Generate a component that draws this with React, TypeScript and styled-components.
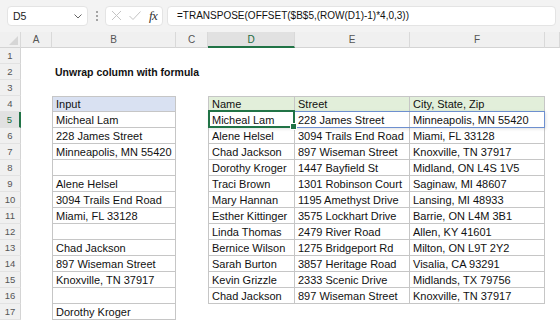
import React from "react";
import styled, { createGlobalStyle } from "styled-components";

const Global = createGlobalStyle`
  html, body { margin: 0; padding: 0; background: #ffffff; }
  body { font-family: "Liberation Sans", Arial, sans-serif; }
  * { box-sizing: border-box; }
`;

const Page = styled.div`
  width: 560px;
  height: 320px;
  overflow: hidden;
  display: flex;
  flex-direction: column;
  background: #fff;
`;

const Toolbar = styled.div`
  height: 32px;
  flex: 0 0 32px;
  background: #f3f3f3;
  display: flex;
  align-items: center;
  padding: 0 4px 1px 7px;
`;

const NameBox = styled.div`
  width: 81px;
  height: 20px;
  background: #fff;
  border: 1px solid #e4e4e4;
  border-radius: 4px;
  display: flex;
  align-items: center;
  justify-content: space-between;
  padding: 0 4px 0 5px;
  font-size: 10.5px;
  color: #222;
`;

const Dots = styled.div`
  width: 17px;
  display: flex;
  flex-direction: column;
  align-items: center;
  gap: 2px;
  span {
    width: 2px;
    height: 2px;
    border-radius: 1px;
    background: #8a8a8a;
  }
`;

const FxBox = styled.div`
  width: 58px;
  height: 20px;
  background: #fff;
  border: 1px solid #e4e4e4;
  border-radius: 4px;
  display: flex;
  align-items: center;
  padding: 0 3px 0 4px;
  gap: 5px;
`;

const FxLabel = styled.span`
  font-family: "Liberation Serif", "Times New Roman", serif;
  font-style: italic;
  font-size: 13px;
  color: #333;
  margin-left: 2px;
  letter-spacing: -0.5px;
`;

const FormulaBox = styled.div`
  flex: 1;
  margin-left: 4px;
  height: 20px;
  background: #fff;
  border: 1px solid #e4e4e4;
  border-radius: 4px;
  display: flex;
  align-items: center;
  padding-left: 9px;
  font-size: 10px;
  color: #111;
  white-space: nowrap;
`;

const Sheet = styled.div`
  display: grid;
  grid-template-columns: 21px 31px 124px 32px 87px 115px 135px 1fr;
  grid-auto-rows: 16px;
  flex: 1;
`;

const Corner = styled.div`
  background: #f0f0f0;
  border-right: 1px solid #d9d9d9;
  border-bottom: 1px solid #d4d4d4;
  position: relative;
  &::after {
    content: "";
    position: absolute;
    right: 2px;
    bottom: 2px;
    width: 0;
    height: 0;
    border-left: 9px solid transparent;
    border-bottom: 9px solid #d6d6d6;
  }
`;

const ColHead = styled.div<{ $sel?: boolean }>`
  background: ${(p) => (p.$sel ? "#e1e1e1" : "#f0f0f0")};
  border-right: 1px solid #d9d9d9;
  border-bottom: ${(p) => (p.$sel ? "2px solid #217346" : "1px solid #d4d4d4")};
  display: flex;
  align-items: center;
  justify-content: center;
  font-size: 10px;
  color: ${(p) => (p.$sel ? "#1b6a3e" : "#555")};
  padding-top: ${(p) => (p.$sel ? "1px" : "0")};
`;

const RowHead = styled.div<{ $sel?: boolean }>`
  background: ${(p) => (p.$sel ? "#e1e1e1" : "#f0f0f0")};
  border-right: ${(p) => (p.$sel ? "2px solid #217346" : "1px solid #d4d4d4")};
  border-bottom: 1px solid #e2e2e2;
  display: flex;
  align-items: center;
  justify-content: center;
  font-size: 9.5px;
  color: ${(p) => (p.$sel ? "#1b6a3e" : "#555")};
`;

const Cell = styled.div<{
  $fill?: string;
  $bordered?: boolean;
  $left?: boolean;
  $top?: boolean;
  $bold?: boolean;
}>`
  position: relative;
  background: ${(p) => p.$fill || (p.$bordered ? "#fff" : "transparent")};
  border-right: ${(p) => (p.$bordered ? "1px solid #c6c6c6" : "none")};
  border-bottom: ${(p) => (p.$bordered ? "1px solid #c6c6c6" : "none")};
  border-left: ${(p) => (p.$bordered && p.$left ? "1px solid #c6c6c6" : "none")};
  border-top: ${(p) => (p.$bordered && p.$top ? "1px solid #c6c6c6" : "none")};
  font-size: ${(p) => (p.$bold ? "10.5px" : "11px")};
  font-weight: ${(p) => (p.$bold ? 700 : 400)};
  color: #111;
  padding-left: 3px;
  display: flex;
  align-items: center;
  white-space: nowrap;
  overflow: visible;
  min-width: 0;
`;

const Spill = styled.div`
  position: absolute;
  left: -1px;
  top: -1px;
  width: 337px;
  height: 17px;
  border: 1px solid #6d8fcf;
  pointer-events: none;
  box-shadow: 1px 1px 3px rgba(0, 0, 0, 0.12);
  z-index: 1;
`;

const Selection = styled.div`
  position: absolute;
  left: -1px;
  top: -2px;
  right: -1px;
  bottom: -1px;
  border: 2px solid #217346;
  pointer-events: none;
  z-index: 2;
  &::after {
    content: "";
    position: absolute;
    right: -4px;
    bottom: -4px;
    width: 5px;
    height: 5px;
    background: #217346;
    border: 1px solid #fff;
  }
`;

const inputCol: string[] = [
  "Micheal Lam",
  "228 James Street",
  "Minneapolis, MN 55420",
  "",
  "Alene Helsel",
  "3094 Trails End Road",
  "Miami, FL 33128",
  "",
  "Chad Jackson",
  "897 Wiseman Street",
  "Knoxville, TN 37917",
  "",
  "Dorothy Kroger",
];

const tableRows: [string, string, string][] = [
  ["Micheal Lam", "228 James Street", "Minneapolis, MN 55420"],
  ["Alene Helsel", "3094 Trails End Road", "Miami, FL 33128"],
  ["Chad Jackson", "897 Wiseman Street", "Knoxville, TN 37917"],
  ["Dorothy Kroger", "1447 Bayfield St", "Midland, ON L4S 1V5"],
  ["Traci Brown", "1301 Robinson Court", "Saginaw, MI 48607"],
  ["Mary Hannan", "1195 Amethyst Drive", "Lansing, MI 48933"],
  ["Esther Kittinger", "3575 Lockhart Drive", "Barrie, ON L4M 3B1"],
  ["Linda Thomas", "2479 River Road", "Allen, KY 41601"],
  ["Bernice Wilson", "1275 Bridgeport Rd", "Milton, ON L9T 2Y2"],
  ["Sarah Burton", "3857 Heritage Road", "Visalia, CA 93291"],
  ["Kevin Grizzle", "2333 Scenic Drive", "Midlands, TX 79756"],
  ["Chad Jackson", "897 Wiseman Street", "Knoxville, TN 37917"],
];

const cols = ["A", "B", "C", "D", "E", "F", "G"];

function renderCell(row: number, colIdx: number) {
  const key = `${cols[colIdx]}${row}`;
  if (colIdx === 1) {
    if (row === 2) {
      return (
        <Cell key={key} $bold>
          Unwrap column with formula
        </Cell>
      );
    }
    if (row === 4) {
      return (
        <Cell key={key} $bordered $left $top $fill="#d9e1f2">
          Input
        </Cell>
      );
    }
    if (row >= 5) {
      return (
        <Cell key={key} $bordered $left>
          {inputCol[row - 5]}
        </Cell>
      );
    }
    return <Cell key={key} />;
  }
  if (colIdx >= 3 && colIdx <= 5) {
    const c = colIdx - 3;
    if (row === 4) {
      return (
        <Cell key={key} $bordered $left={c === 0} $top $fill="#e2efda">
          {["Name", "Street", "City, State, Zip"][c]}
        </Cell>
      );
    }
    if (row >= 5 && row <= 16) {
      const active = row === 5 && c === 0;
      return (
        <Cell key={key} $bordered $left={c === 0}>
          {tableRows[row - 5][c]}
          {active && <Spill />}
          {active && <Selection />}
        </Cell>
      );
    }
  }
  return <Cell key={key} />;
}

const ChevronDown = () => (
  <svg width="10" height="10" viewBox="0 0 10 10">
    <path d="M1.5 3.5 L5 7 L8.5 3.5" fill="none" stroke="#666" strokeWidth="1" />
  </svg>
);

const XIcon = () => (
  <svg width="13" height="13" viewBox="0 0 13 13">
    <path d="M2 2 L11 11 M11 2 L2 11" stroke="#c4c4c4" strokeWidth="1" fill="none" />
  </svg>
);

const CheckIcon = () => (
  <svg width="14" height="13" viewBox="0 0 14 13">
    <path d="M1.5 7 L5 10.5 L12.5 2.5" stroke="#c4c4c4" strokeWidth="1" fill="none" />
  </svg>
);

export default function App() {
  const rows = Array.from({ length: 17 }, (_, i) => i + 1);
  return (
    <>
      <Global />
      <Page>
        <Toolbar>
          <NameBox>
            <span>D5</span>
            <ChevronDown />
          </NameBox>
          <Dots>
            <span />
            <span />
            <span />
          </Dots>
          <FxBox>
            <XIcon />
            <CheckIcon />
            <FxLabel>fx</FxLabel>
          </FxBox>
          <FormulaBox>=TRANSPOSE(OFFSET($B$5,(ROW(D1)-1)*4,0,3))</FormulaBox>
        </Toolbar>
        <Sheet>
          <Corner />
          {cols.map((c) => (
            <ColHead key={c} $sel={c === "D"}>
              {c === "G" ? "" : c}
            </ColHead>
          ))}
          {rows.map((r) => (
            <React.Fragment key={r}>
              <RowHead $sel={r === 5}>{r}</RowHead>
              {cols.map((_, ci) => renderCell(r, ci))}
            </React.Fragment>
          ))}
        </Sheet>
      </Page>
    </>
  );
}
